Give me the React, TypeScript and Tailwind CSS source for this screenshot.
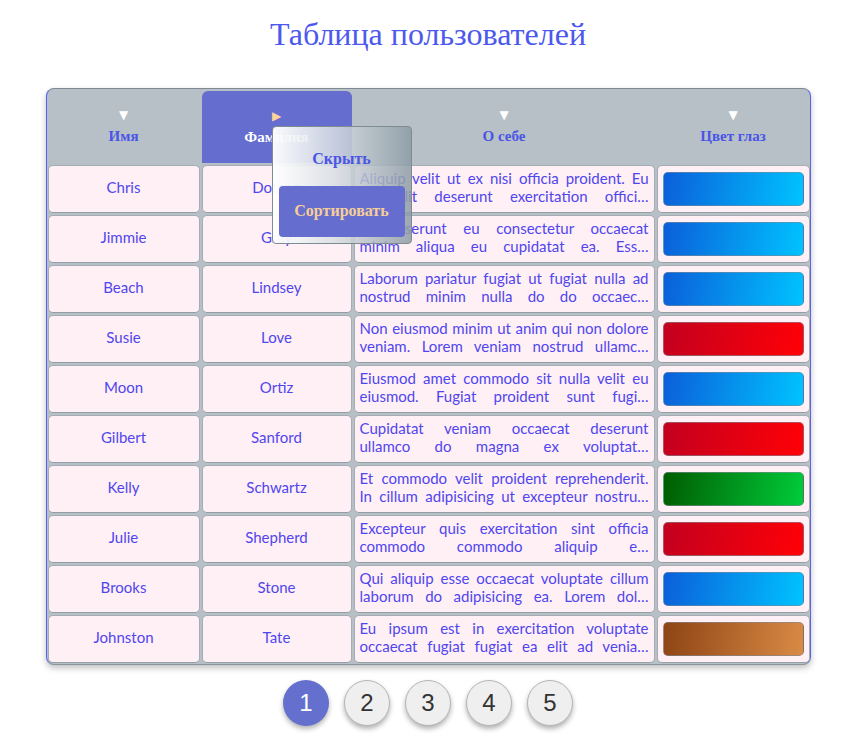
import React from "react";

type Row = {
  first: string;
  last: string;
  l1: string;
  l2: string;
  eye: "blue" | "red" | "green" | "brown";
};

const rows: Row[] = [
  { first: "Chris", last: "Dotson", l1: "Aliquip velit ut ex nisi officia proident. Eu", l2: "Do elit deserunt exercitation offici…", eye: "blue" },
  { first: "Jimmie", last: "Gray", l1: "Id deserunt eu consectetur occaecat", l2: "minim aliqua eu cupidatat ea. Ess…", eye: "blue" },
  { first: "Beach", last: "Lindsey", l1: "Laborum pariatur fugiat ut fugiat nulla ad", l2: "nostrud minim nulla do do occaec…", eye: "blue" },
  { first: "Susie", last: "Love", l1: "Non eiusmod minim ut anim qui non dolore", l2: "veniam. Lorem veniam nostrud ullamc…", eye: "red" },
  { first: "Moon", last: "Ortiz", l1: "Eiusmod amet commodo sit nulla velit eu", l2: "eiusmod. Fugiat proident sunt fugi…", eye: "blue" },
  { first: "Gilbert", last: "Sanford", l1: "Cupidatat veniam occaecat deserunt", l2: "ullamco do magna ex voluptat…", eye: "red" },
  { first: "Kelly", last: "Schwartz", l1: "Et commodo velit proident reprehenderit.", l2: "In cillum adipisicing ut excepteur nostru…", eye: "green" },
  { first: "Julie", last: "Shepherd", l1: "Excepteur quis exercitation sint officia", l2: "commodo commodo aliquip e…", eye: "red" },
  { first: "Brooks", last: "Stone", l1: "Qui aliquip esse occaecat voluptate cillum", l2: "laborum do adipisicing ea. Lorem dol…", eye: "blue" },
  { first: "Johnston", last: "Tate", l1: "Eu ipsum est in exercitation voluptate", l2: "occaecat fugiat fugiat ea elit ad venia…", eye: "brown" },
];

const eyeClass: Record<Row["eye"], string> = {
  blue: "bg-[linear-gradient(100deg,#0b5fd9,#00c3ff)]",
  red: "bg-[linear-gradient(100deg,#c3001f,#ff0006)]",
  green: "bg-[linear-gradient(100deg,#005c00,#00cc3b)]",
  brown: "bg-[linear-gradient(100deg,#8e4414,#d98b45)]",
};

const cellBase =
  "bg-[#fff0f5] border border-[#a4adb3] border-b-[#939da4] rounded-[5px] text-[#5046ef] [font-family:Lato,sans-serif] text-[15px]";

function HeaderCell({ label, active }: { label: string; active?: boolean }) {
  if (active) {
    return (
      <div className="mt-[2px] bg-[#656dce] rounded-t-[6px] flex flex-col items-center justify-center gap-[5px]">
        <span className="text-[#ffd29a] text-[12px] leading-[14px] [font-family:'DejaVu_Sans',sans-serif]">▶</span>
        <span className="text-white font-bold text-[15px] leading-[18px] [font-family:'Liberation_Serif',serif]">{label}</span>
      </div>
    );
  }
  return (
    <div className="flex flex-col items-center justify-center gap-[5px]">
      <span className="text-white text-[12px] leading-[14px] [font-family:'DejaVu_Sans',sans-serif]">▼</span>
      <span className="text-[#4a55e6] font-bold text-[15px] leading-[18px] [font-family:'Liberation_Serif',serif]">{label}</span>
    </div>
  );
}

export default function App() {
  return (
    <div className="w-[856px] flex flex-col items-center bg-white min-h-[736px]">
      <h1 className="mt-[14px] h-[40px] leading-[40px] text-[32px] text-[#4c58ee] [font-family:'Liberation_Serif',serif]">
        Таблица пользователей
      </h1>

      <div className="relative mt-[34px] w-[765px] border border-[#5662f2] border-t-[#7f8b94] border-b-[#89949b] rounded-[8px] bg-[#b6c0c6] shadow-[0_3px_6px_rgba(0,0,0,0.25)] px-[1px] pb-[1px]">
        <div className="grid grid-cols-[152px_150px_301px_153px] grid-rows-[74px] auto-rows-[48px] gap-[2px]">
          <HeaderCell label="Имя" />
          <HeaderCell label="Фамилия" active />
          <HeaderCell label="О себе" />
          <HeaderCell label="Цвет глаз" />
          {rows.map((r) => (
            <React.Fragment key={r.first}>
              <div className={`${cellBase} pb-[3px] flex items-center justify-center`}>{r.first}</div>
              <div className={`${cellBase} pb-[3px] flex items-center justify-center`}>{r.last}</div>
              <div className={`${cellBase} px-[5px] pb-[4px] flex flex-col justify-center overflow-hidden leading-[18px]`}>
                <div className="whitespace-nowrap [text-align:justify] [text-align-last:justify]">{r.l1}</div>
                <div className="whitespace-nowrap [text-align:justify] [text-align-last:justify]">{r.l2}</div>
              </div>
              <div className={`${cellBase} pl-[5px] pr-[5px] py-[6px] flex`}>
                <div className={`flex-1 rounded-[5px] border border-[#7d8b96]/60 ${eyeClass[r.eye]}`} />
              </div>
            </React.Fragment>
          ))}
        </div>

        <div className="absolute left-[225px] top-[37px] w-[140px] h-[118px] rounded-[4px] border border-[#7f8b93] bg-[linear-gradient(90deg,rgba(255,255,255,0.97),rgba(215,222,226,0.85)_45%,rgba(140,155,165,0.85))] p-[6px] flex flex-col gap-[1px]">
          <div className="h-[52px] flex items-center justify-center text-[#4a55e6] font-bold text-[16px] [font-family:'Liberation_Serif',serif]">
            Скрыть
          </div>
          <div className="h-[52px] rounded-[4px] bg-[#656dce] flex items-center justify-center text-[#f6cf98] font-bold text-[16px] [font-family:'Liberation_Serif',serif]">
            Сортировать
          </div>
        </div>
      </div>

      <div className="mt-[15px] flex gap-[15px]">
        {[1, 2, 3, 4, 5].map((n) => (
          <div
            key={n}
            className={
              n === 1
                ? "w-[46px] h-[46px] rounded-full bg-[#6570ce] text-white flex items-center justify-center text-[24px] [font-family:'Liberation_Sans',sans-serif] shadow-[0_3px_5px_rgba(0,0,0,0.3)]"
                : "w-[46px] h-[46px] rounded-full bg-[#efefef] border border-[#b5b5b5] text-[#333] flex items-center justify-center text-[24px] [font-family:'Liberation_Sans',sans-serif] shadow-[0_3px_5px_rgba(0,0,0,0.3)]"
            }
          >
            {n}
          </div>
        ))}
      </div>
    </div>
  );
}
